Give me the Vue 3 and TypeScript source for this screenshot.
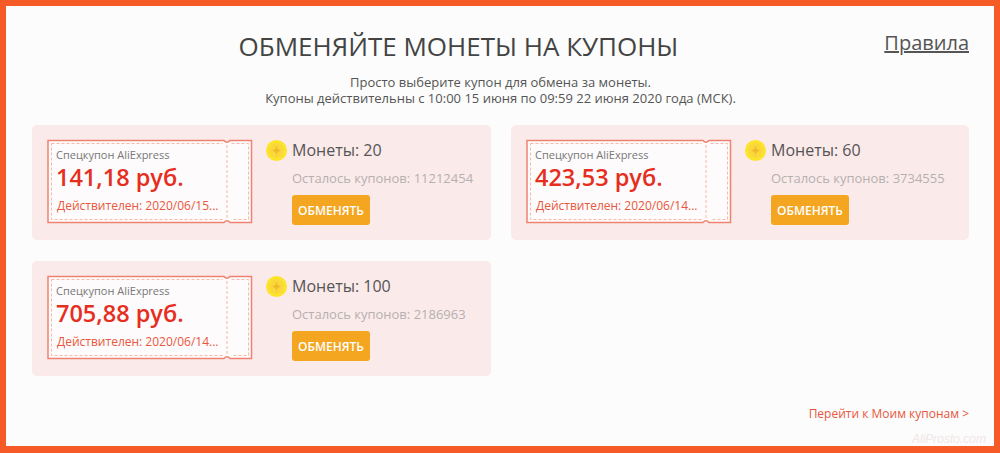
<script setup lang="ts">
interface Coupon { amount: string; date: string; coins: number; left: number }
const coupons: Coupon[] = [
  { amount: '141,18 руб.', date: '2020/06/15...', coins: 20, left: 11212454 },
  { amount: '423,53 руб.', date: '2020/06/14...', coins: 60, left: 3734555 },
  { amount: '705,88 руб.', date: '2020/06/14...', coins: 100, left: 2186963 },
]
</script>

<template>
  <div class="frame">
    <header class="head">
      <h1 class="title">ОБМЕНЯЙТЕ МОНЕТЫ НА КУПОНЫ</h1>
      <a class="rules">Правила</a>
    </header>
    <p class="lead">
      Просто выберите купон для обмена за монеты.<br />
      Купоны действительны с 10:00 15 июня по 09:59 22 июня 2020 года (МСК).
    </p>
    <section class="grid">
      <article v-for="c in coupons" :key="c.coins" class="card">
        <div class="ticket">
          <svg class="outline" width="206" height="85" viewBox="0 0 206 85" fill="none">
            <path d="M1 1.500H177Q180 5 183 1.500H204.500V83.500H183Q180 80 177 83.500H1Z" stroke="#f0836f" stroke-width="1.500" fill="#fdfbfb" />
            <path d="M4.500 4.500H175.500M184.500 4.500H201.500V80.500H184.500M175.500 80.500H4.500V4.500M180 6V79" stroke="#f6b8ab" stroke-width="1" stroke-dasharray="3 2" />
          </svg>
          <div class="ticket-text">
            <div class="kind">Спецкупон AliExpress</div>
            <div class="amount">{{ c.amount }}</div>
            <div class="valid">Действителен: {{ c.date }}</div>
          </div>
        </div>
        <div class="info">
          <div class="coins">
            <svg class="coin" width="21" height="21" viewBox="0 0 21 21">
              <circle cx="10.500" cy="10.500" r="10.500" fill="#fde428" />
              <circle cx="10.500" cy="10.500" r="7.500" fill="#f9d83a" />
              <path d="M10.500 5.500Q11 10 15.500 10.500Q11 11 10.500 15.500Q10 11 5.500 10.500Q10 10 10.500 5.500Z" fill="#f2b92c" />
            </svg>
            <span>Монеты: {{ c.coins }}</span>
          </div>
          <div class="left">Осталось купонов: {{ c.left }}</div>
          <button class="swap" type="button">ОБМЕНЯТЬ</button>
        </div>
      </article>
    </section>
    <a class="mine">Перейти к Моим купонам &gt;</a>
    <span class="mark">AliProsto.com</span>
  </div>
</template>

<style>
html, body { margin: 0; background: #fcfcfc; }
</style>

<style scoped>
.frame {
  position: relative;
  box-sizing: border-box;
  width: 1000px;
  height: 453px;
  border: solid #f65a26;
  border-width: 6px 6px 7px 6px;
  background: #fcfcfc;
  padding: 0 25px 0 26px;
  font-family: "Open Sans", sans-serif;
  color: #555;
  overflow: hidden;
}
.head {
  position: relative;
  height: 63px;
  padding-right: 84px;
  text-align: center;
}
.title {
  margin: 0;
  padding-top: 23px;
  font-size: 26px;
  line-height: 34px;
  font-weight: 400;
  color: #444;
}
.rules {
  position: absolute;
  right: 0;
  top: 24px;
  font-size: 20px;
  line-height: 26px;
  color: #555;
  text-decoration: underline;
}
.lead {
  margin: 0;
  padding-top: 5px;
  text-align: center;
  font-size: 13px;
  line-height: 16px;
  color: #555;
}
.grid {
  display: grid;
  grid-template-columns: 459px 458px;
  column-gap: 20px;
  row-gap: 21px;
  margin-top: 19px;
}
.card {
  display: flex;
  align-items: flex-start;
  height: 115px;
  box-sizing: border-box;
  padding: 14px 0 0 15px;
  background: #fbeaea;
  border-radius: 5px;
}
.ticket {
  position: relative;
  width: 206px;
  height: 85px;
  flex: none;
}
.outline {
  position: absolute;
  inset: 0;
}
.ticket-text {
  position: relative;
  padding: 9px 0 0 9px;
}
.kind {
  font-size: 11px;
  line-height: 14px;
  color: #777;
}
.amount {
  margin-top: -1px;
  font-size: 23.500px;
  line-height: 33px;
  font-weight: 600;
  color: #e62e1f;
  white-space: nowrap;
}
.valid {
  margin-top: 4px;
  margin-left: 1px;
  font-size: 12px;
  line-height: 15px;
  color: #e8573d;
  white-space: nowrap;
}
.info {
  padding-top: 1px;
  margin-left: 13px;
}
.coins {
  display: flex;
  align-items: center;
  gap: 5px;
  font-size: 16px;
  line-height: 21px;
  color: #555;
}
.left {
  margin: 9px 0 0 26px;
  font-size: 13px;
  line-height: 17px;
  color: #b5b0b0;
  white-space: nowrap;
}
.swap {
  display: block;
  margin: 8px 0 0 26px;
  width: 78px;
  height: 30px;
  padding: 0;
  border: 0;
  border-radius: 3px;
  background: #f4a620;
  color: #fff;
  font-family: "Open Sans", sans-serif;
  font-size: 12px;
  font-weight: 600;
}
.mine {
  position: absolute;
  bottom: 25px;
  right: 25px;
  font-size: 12px;
  line-height: 15px;
  color: #e8573d;
}
.mark {
  position: absolute;
  right: 8px;
  bottom: 0;
  font-family: "Liberation Sans", sans-serif;
  font-size: 12px;
  font-style: italic;
  line-height: 14px;
  color: #f1e6e6;
}
</style>
